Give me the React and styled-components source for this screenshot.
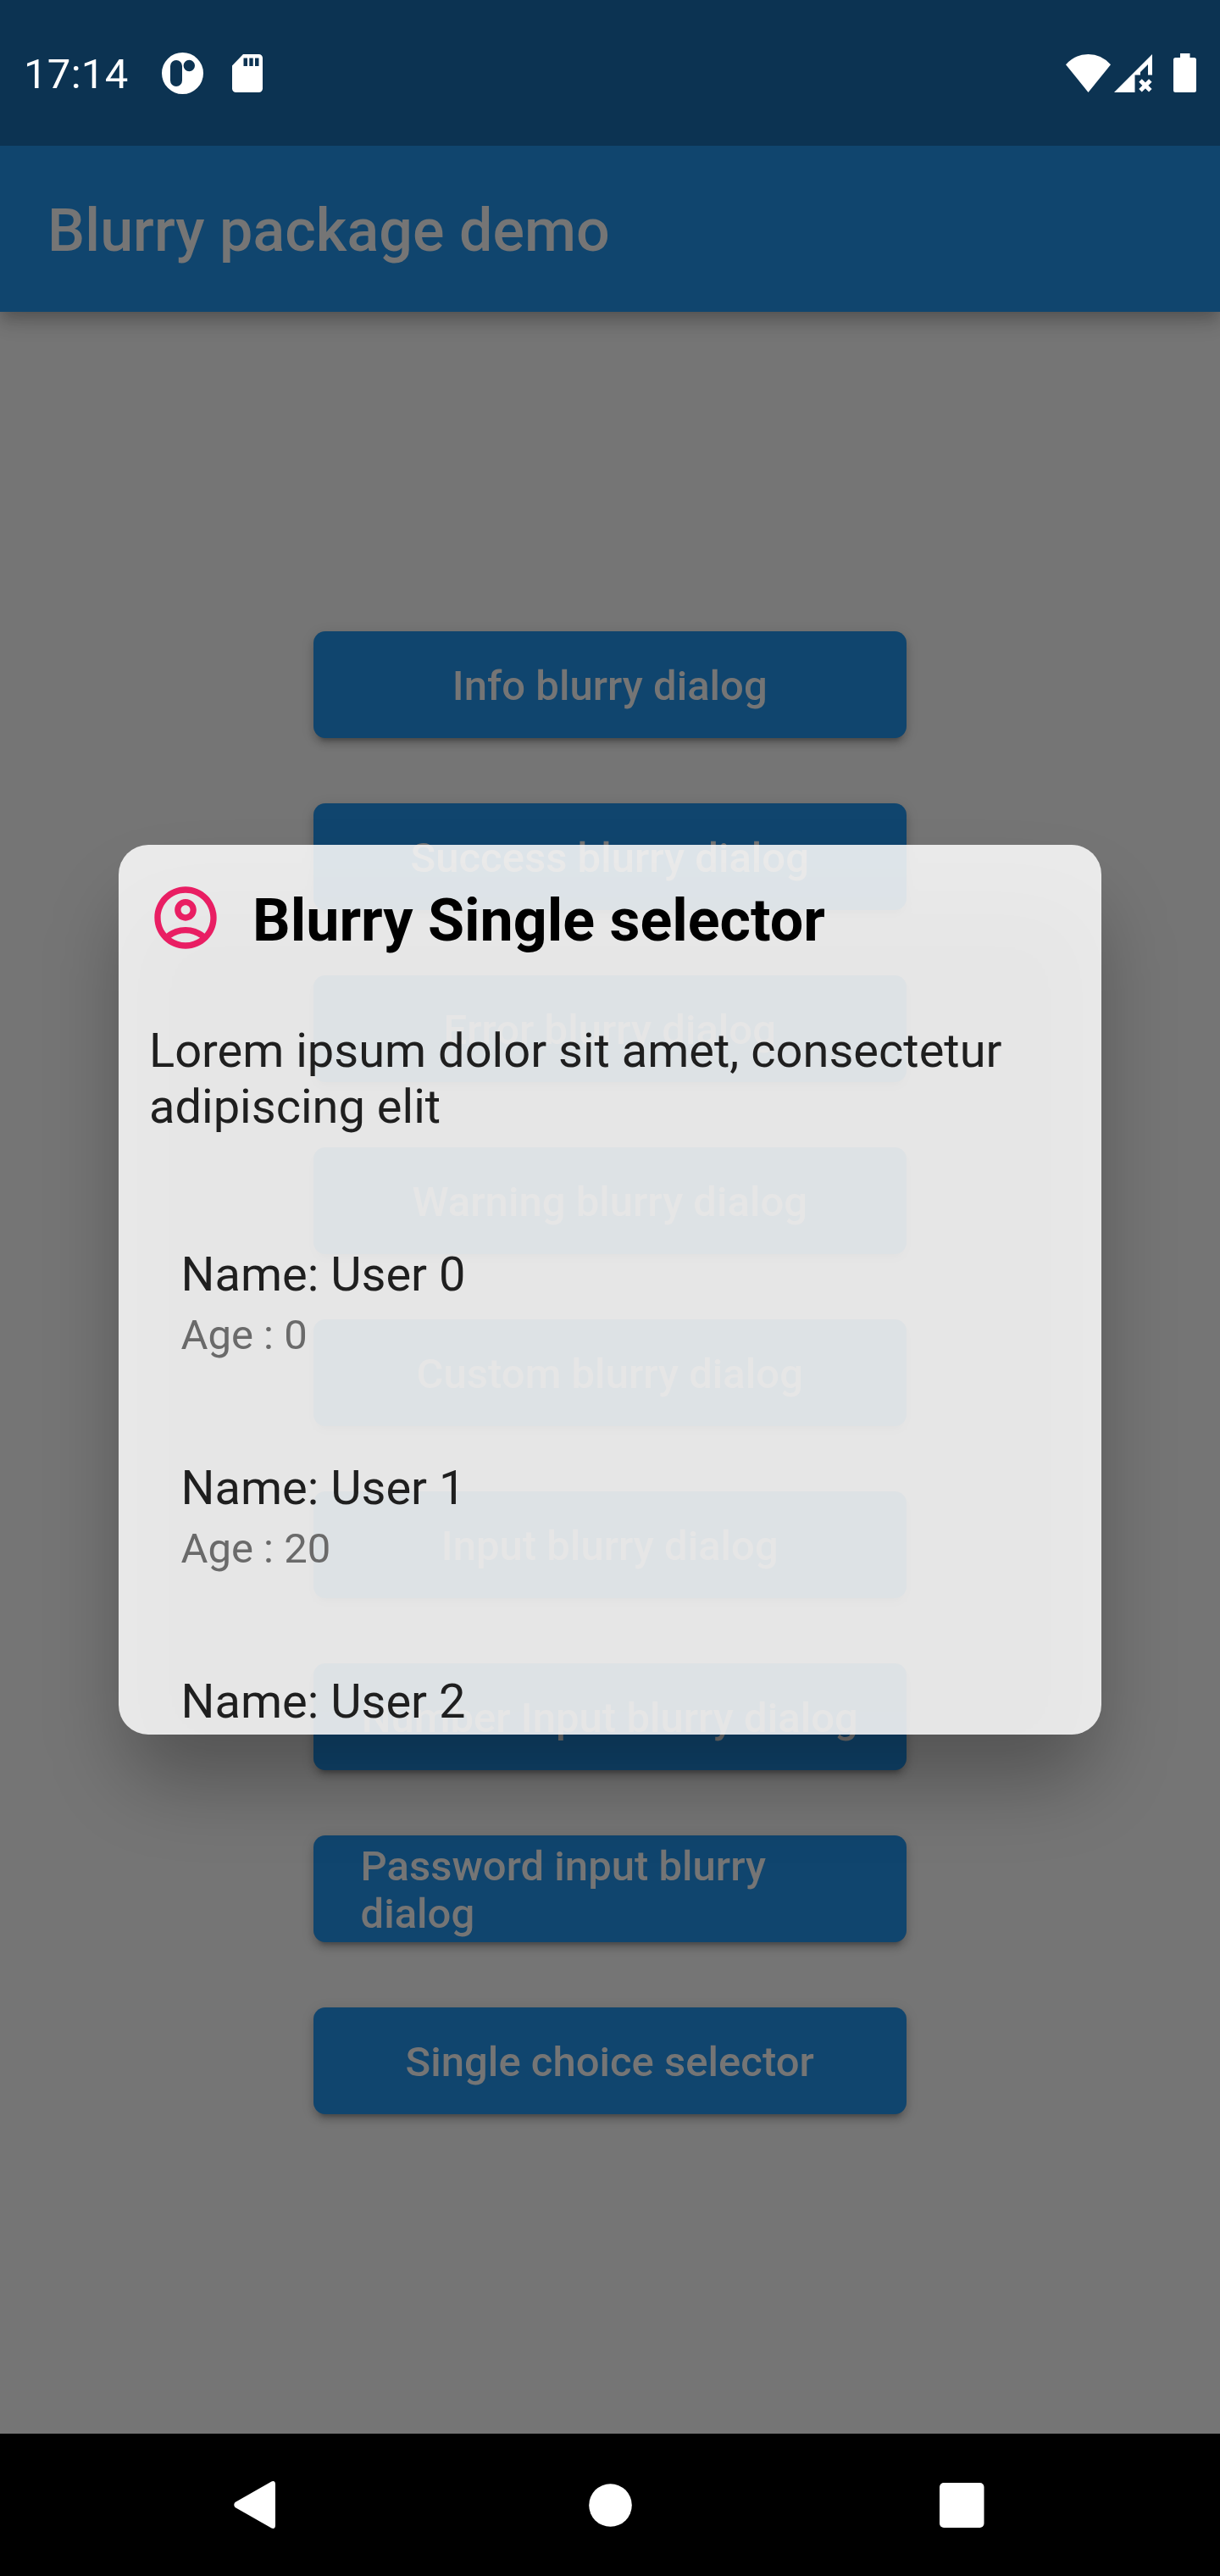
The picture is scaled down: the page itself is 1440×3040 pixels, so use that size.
import React from "react";
import styled, { createGlobalStyle } from "styled-components";

const Global = createGlobalStyle`
  body { margin: 0; background: #000; font-family: Roboto, "Liberation Sans", sans-serif; }
`;

const Screen = styled.div`
  position: relative;
  width: 1440px;
  height: 3040px;
  display: flex;
  flex-direction: column;
  overflow: hidden;
`;

const StatusBar = styled.header`
  position: relative;
  z-index: 1;
  height: 172px;
  box-sizing: border-box;
  padding: 0 28px;
  display: flex;
  align-items: center;
  justify-content: space-between;
  background: #0c3352;
  color: #fff;
`;

const StatusGroup = styled.div`
  display: flex;
  align-items: center;
  height: 52px;
`;

const Clock = styled.span`
  width: 163px;
  padding-top: 4px;
  font-size: 49px;
  line-height: 52px;
  letter-spacing: 0.3px;
`;

const Glyph = styled.svg`
  display: block;
  flex: none;
  width: ${(p) => p.$w}px;
  height: ${(p) => p.$h}px;
  margin-left: ${(p) => p.$gap || 0}px;
  fill: ${(p) => p.$color || "#fff"};
`;

const AppBar = styled.div`
  position: relative;
  height: 196px;
  box-sizing: border-box;
  padding: 4px 56px 0;
  display: flex;
  align-items: center;
  background: #10456e;
  color: #757575;
  font-size: 70px;
  font-weight: 500;
  letter-spacing: 0.05px;
  box-shadow: 0 7px 14px -4px rgba(0, 0, 0, 0.15), 0 14px 18px rgba(0, 0, 0, 0.12), 0 4px 35px rgba(0, 0, 0, 0.1);
`;

const Body = styled.main`
  flex: 1;
  display: flex;
  flex-direction: column;
  align-items: center;
  justify-content: center;
  gap: 77px;
  background: #757575;
`;

const DemoButton = styled.button`
  width: 700px;
  height: 126px;
  flex: none;
  box-sizing: border-box;
  margin: 0;
  padding: 4px 56px 0 55.5px;
  border: 0;
  border-radius: 14px;
  display: flex;
  align-items: center;
  justify-content: center;
  background: #10456e;
  color: #757575;
  font: 500 49px/56px Roboto, "Liberation Sans", sans-serif;
  letter-spacing: 0.02px;
  text-align: left;
  box-shadow: 0 10px 4px -7px rgba(0, 0, 0, 0.2), 0 7px 8px rgba(0, 0, 0, 0.14), 0 3px 16px rgba(0, 0, 0, 0.12);
`;

const NavBar = styled.nav`
  height: 168px;
  box-sizing: border-box;
  padding-left: 276px;
  display: flex;
  align-items: center;
  background: #000;
`;

const Modal = styled.div`
  position: absolute;
  left: 140px;
  top: 997px;
  width: 1160px;
  height: 1050px;
`;

const Shadow = styled.div`
  position: absolute;
  inset: 66px 6px -56px;
  border-radius: 60px;
  background: rgba(0, 0, 0, 0.28);
  filter: blur(44px);
`;

const Dialog = styled.section`
  position: relative;
  height: 100%;
  box-sizing: border-box;
  overflow: hidden;
  border-radius: 35px;
  padding: 42px 35px 0;
  background: rgba(250, 250, 250, 0.88);
`;

const DialogHeader = styled.div`
  height: 100px;
  display: flex;
  align-items: flex-start;
`;

const DialogTitle = styled.h1`
  margin: 6px 0 0 35px;
  color: #000;
  font-size: 70px;
  line-height: 82px;
  font-weight: 700;
`;

const Description = styled.p`
  margin: 68px 0 0 1px;
  font-size: 56px;
  line-height: 66px;
  color: #1f1f1f;
`;

const UserList = styled.ul`
  list-style: none;
  margin: 125px 0 0;
  padding: 0 38.5px;
`;

const UserItem = styled.li`
  height: 252px;
`;

const UserName = styled.div`
  font-size: 56px;
  line-height: 80px;
  color: #1f1f1f;
`;

const UserAge = styled.div`
  font-size: 49px;
  line-height: 64px;
  color: #6a6a6a;
`;

const actions = [
  "Info blurry dialog",
  "Success blurry dialog",
  "Error blurry dialog",
  "Warning blurry dialog",
  "Custom blurry dialog",
  "Input blurry dialog",
  "Number Input blurry dialog",
  "Password input blurry dialog",
  "Single choice selector",
];

const users = [
  { name: "User 0", age: 0 },
  { name: "User 1", age: 20 },
  { name: "User 2" },
];

export default function App() {
  return (
    <Screen>
      <Global />
      <StatusBar>
        <StatusGroup>
          <Clock>17:14</Clock>
          <Glyph $w={49} $h={49} viewBox="0 0 49 49">
            <path fillRule="evenodd" d="M24.500 0a24.500 24.500 0 1 1 0 49a24.500 24.500 0 1 1 0-49zM17 9a7 7 0 0 0-7 7v17a7 7 0 0 0 14 0v-17a7 7 0 0 0-7-7zM32.300 8.800a6.700 6.700 0 1 0 0 13.400a6.700 6.700 0 1 0 0-13.400z" />
          </Glyph>
          <Glyph $w={36} $h={45} $gap={34} viewBox="0 0 36 45">
            <path fillRule="evenodd" d="M13 0H31.500A4.500 4.500 0 0 1 36 4.500V40.500A4.500 4.500 0 0 1 31.500 45H4.500A4.500 4.500 0 0 1 0 40.500V13.500zM13.500 4.500v9.500h4.500v-9.500zM20.300 4.500v9.500h4.400v-9.500zM27 4.500v9.500h4.500v-9.500z" />
          </Glyph>
        </StatusGroup>
        <StatusGroup>
          <Glyph $w={53} $h={45} viewBox="0 0 53 45">
            <path d="M0 12.200Q11 0 26.500 0T53 12.200L26.500 45z" />
          </Glyph>
          <Glyph $w={45} $h={45} $gap={4} viewBox="0 0 45 45">
            <path d="M45 0V24.500H40V12L31 21V24.500H24.500V45H0z" />
            <path d="M31 31L42.800 42.800M42.800 31L31 42.800" stroke="#fff" strokeWidth="5" />
          </Glyph>
          <Glyph $w={27} $h={46} $gap={25} viewBox="0 0 27 46">
            <path d="M8 0H19.500V5H24.500A2.500 2.500 0 0 1 27 7.500V43.500A2.500 2.500 0 0 1 24.500 46H2.500A2.500 2.500 0 0 1 0 43.500V7.500A2.500 2.500 0 0 1 2.500 5H8z" />
          </Glyph>
        </StatusGroup>
      </StatusBar>
      <AppBar>Blurry package demo</AppBar>
      <Body>
        {actions.map((label) => (
          <DemoButton key={label}>{label}</DemoButton>
        ))}
      </Body>
      <NavBar>
        <Glyph $w={49} $h={56} viewBox="0 0 49 56">
          <path d="M44.500 0.400Q49 -1 49 4V52Q49 57 44.500 55.600L1.500 31Q-1 28 1.500 25z" />
        </Glyph>
        <Glyph $w={51} $h={51} $gap={369.5} viewBox="0 0 51 51">
          <circle cx="25.500" cy="25.500" r="25.300" />
        </Glyph>
        <Glyph $w={52.5} $h={53} $gap={363.5} viewBox="0 0 52.5 53">
          <rect width="52.500" height="53" rx="5" />
        </Glyph>
      </NavBar>
      <Modal>
        <Shadow />
        <Dialog>
          <DialogHeader>
            <Glyph $w={88} $h={88} viewBox="0 0 24 24" $color="#e91e63">
              <path d="M12 2C6.480 2 2 6.480 2 12s4.480 10 10 10 10-4.480 10-10S17.520 2 12 2zM7.350 18.500C8.660 17.560 10.260 17 12 17s3.340.56 4.650 1.500C15.340 19.440 13.740 20 12 20s-3.340-.56-4.650-1.500zm10.790-1.380C16.450 15.800 14.320 15 12 15s-4.450.8-6.140 2.120C4.700 15.730 4 13.950 4 12c0-4.420 3.580-8 8-8s8 3.580 8 8c0 1.950-.7 3.730-1.860 5.120z" />
              <path d="M12 6c-1.930 0-3.500 1.570-3.500 3.500S10.070 13 12 13s3.500-1.570 3.500-3.500S13.930 6 12 6zm0 5c-.83 0-1.500-.67-1.500-1.500S11.170 8 12 8s1.500.67 1.500 1.500S12.830 11 12 11z" />
            </Glyph>
            <DialogTitle>Blurry Single selector</DialogTitle>
          </DialogHeader>
          <Description>Lorem ipsum dolor sit amet, consectetur adipiscing elit</Description>
          <UserList>
            {users.map((u) => (
              <UserItem key={u.name}>
                <UserName>Name: {u.name}</UserName>
                {u.age !== undefined && <UserAge>Age : {u.age}</UserAge>}
              </UserItem>
            ))}
          </UserList>
        </Dialog>
      </Modal>
    </Screen>
  );
}
